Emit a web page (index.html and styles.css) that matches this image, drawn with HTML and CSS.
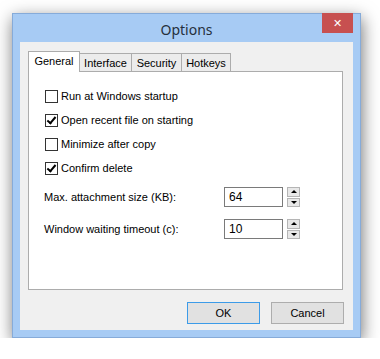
FILE: index.html
```html
<!DOCTYPE html>
<html lang="en">
  <head>
    <meta charset="UTF-8" />
    <title>Options</title>
    <link rel="stylesheet" href="styles.css">
  </head>
  <body>
    <div class="window">
      <div class="titlebar">
        <span class="title">Options</span>
        <span class="close">&#x2715;</span>
      </div>
      <div class="client">
        <div class="tabs">
          <div class="tab active">General</div>
          <div class="tab">Interface</div>
          <div class="tab">Security</div>
          <div class="tab">Hotkeys</div>
        </div>
        <div class="pane">
          <label class="check"><span class="box"></span>Run at Windows startup</label>
          <label class="check"><span class="box checked"></span>Open recent file on starting</label>
          <label class="check"><span class="box"></span>Minimize after copy</label>
          <label class="check"><span class="box checked"></span>Confirm delete</label>

          <div class="field first">
            <span class="label">Max. attachment size (KB):</span>
            <span class="input">64</span>
            <span class="spin"><span class="up"></span><span class="down"></span></span>
          </div>
          <div class="field">
            <span class="label">Window waiting timeout (c):</span>
            <span class="input">10</span>
            <span class="spin"><span class="up"></span><span class="down"></span></span>
          </div>
        </div>
        <div class="buttons">
          <button class="btn default">OK</button>
          <button class="btn">Cancel</button>
        </div>
      </div>
    </div>
  </body>
</html>
```

FILE: styles.css
```css
body {
  margin: 0;
  padding: 0;
  background: #ffffff;
  font-family: "Liberation Sans", Arial, sans-serif;
  font-size: 11px;
  color: #000;
}

.window {
  margin: 13px 0 0 12px;
  width: 347px;
  height: 323px;
  background: #a7cbf4;
  border: 1px solid #86abd9;
  box-shadow: 1px 5px 16px rgba(0, 0, 0, 0.55);
  display: flex;
  flex-direction: column;
}

.titlebar {
  height: 28px;
  flex-shrink: 0;
  position: relative;
  display: flex;
  align-items: center;
  justify-content: center;
}

.title {
  font-family: "Noto Sans", sans-serif;
  font-size: 14px;
  color: #25303c;
  margin-top: 2px;
}

.close {
  position: absolute;
  top: -1px;
  right: 7px;
  width: 31px;
  height: 20px;
  background: #c75050;
  color: #fff;
  font-family: "DejaVu Sans", sans-serif;
  font-size: 11px;
  font-weight: bold;
  display: flex;
  align-items: center;
  justify-content: center;
}

.client {
  flex: 1;
  margin: 0 7px 7px 7px;
  background: #f0f0f0;
  padding: 9px 10px 0 8px;
  display: flex;
  flex-direction: column;
}

.tabs {
  display: flex;
  align-items: flex-start;
  height: 21px;
  margin-bottom: -1px;
  position: relative;
  z-index: 1;
}

.tab {
  height: 17px;
  margin-top: 2px;
  margin-left: -1px;
  border: 1px solid #acacac;
  border-bottom: none;
  background: #ececec;
  line-height: 18px;
  text-align: center;
}

.tab:nth-child(2) { width: 51px; }
.tab:nth-child(3) { width: 49px; }
.tab:nth-child(4) { width: 48px; }

.tab.active {
  width: 50px;
  height: 20px;
  margin-top: 0;
  margin-left: 0;
  background: #ffffff;
  position: relative;
  z-index: 2;
  line-height: 18px;
}

.pane {
  height: 205px;
  border: 1px solid #acacac;
  background: #ffffff;
  padding: 12px 0 0 16px;
}

.check {
  display: flex;
  align-items: center;
  height: 24px;
}

.box {
  width: 11px;
  height: 11px;
  border: 1px solid #333333;
  background: #fff;
  margin-right: 3px;
  position: relative;
}

.box.checked::after {
  content: "";
  position: absolute;
  left: 3px;
  top: 0px;
  width: 3px;
  height: 7px;
  border: solid #000;
  border-width: 0 2px 2px 0;
  transform: rotate(40deg);
}

.field {
  display: flex;
  align-items: center;
  height: 20px;
  margin-top: 12px;
}

.field.first {
  margin-top: 7px;
}

.label {
  width: 180px;
  margin-left: -1px;
}

.input {
  width: 53px;
  height: 18px;
  border: 1px solid #7a7a7a;
  padding-left: 4px;
  line-height: 18px;
  font-size: 12px;
}

.spin {
  margin-left: 4px;
  width: 13px;
  height: 20px;
  display: flex;
  flex-direction: column;
  gap: 1px;
}

.spin span {
  flex: 1;
  background: #e8e8e8;
  border: 1px solid #b5b5b5;
  position: relative;
}

.spin span::after {
  content: "";
  position: absolute;
  left: 3px;
  top: 2px;
  border-left: 3px solid transparent;
  border-right: 3px solid transparent;
}

.spin .up::after {
  border-bottom: 3px solid #000;
}

.spin .down::after {
  border-top: 3px solid #000;
}

.buttons {
  display: flex;
  justify-content: flex-end;
  gap: 11px;
  margin-top: 12px;
  margin-right: -1px;
}

.btn {
  width: 73px;
  height: 22px;
  border: 1px solid #adadad;
  background: #e1e1e1;
  font-family: "Liberation Sans", Arial, sans-serif;
  font-size: 11px;
  color: #000;
  padding: 0;
}

.btn.default {
  border-color: #3c9be8;
}
```
